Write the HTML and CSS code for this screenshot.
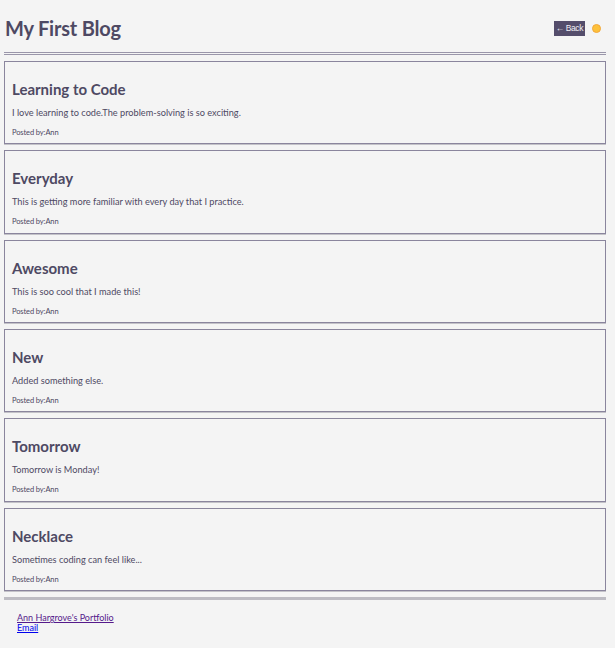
FILE: index.html
```html
<!DOCTYPE html>
<html>
<head>
<meta charset="utf-8">
<link rel="stylesheet" href="styles.css">
</head>
<body>
<header class="top">
  <h1 class="title">My First Blog</h1>
  <div class="actions">
    <a class="back" href="#">&larr; Back</a>
    <span class="dot"></span>
  </div>
</header>
<div class="rule-double"></div>
<main class="posts">
  <article class="post">
    <h2>Learning to Code</h2>
    <p class="body">I love learning to code.The problem-solving is so exciting.</p>
    <p class="meta">Posted by:Ann</p>
  </article>
  <article class="post">
    <h2>Everyday</h2>
    <p class="body">This is getting more familiar with every day that I practice.</p>
    <p class="meta">Posted by:Ann</p>
  </article>
  <article class="post">
    <h2>Awesome</h2>
    <p class="body">This is soo cool that I made this!</p>
    <p class="meta">Posted by:Ann</p>
  </article>
  <article class="post">
    <h2>New</h2>
    <p class="body">Added something else.</p>
    <p class="meta">Posted by:Ann</p>
  </article>
  <article class="post">
    <h2>Tomorrow</h2>
    <p class="body">Tomorrow is Monday!</p>
    <p class="meta">Posted by:Ann</p>
  </article>
  <article class="post">
    <h2>Necklace</h2>
    <p class="body">Sometimes coding can feel like...</p>
    <p class="meta">Posted by:Ann</p>
  </article>
</main>
<div class="rule-thick"></div>
<footer class="foot">
  <a class="visited" href="#">Ann Hargrove's Portfolio</a>
  <a class="link" href="#">Email</a>
</footer>
</body>
</html>
```
FILE: styles.css
```css
html, body {
  margin: 0;
  padding: 0;
  background: #f4f4f4;
}
body {
  font-family: Lato, "Noto Sans", sans-serif;
  color: #4e4963;
  padding: 0 9px 0 4px;
}
.top {
  display: flex;
  align-items: center;
  justify-content: space-between;
  height: 52px;
}
.title {
  margin: 3px 0 0 1px;
  font-size: 20px;
  font-weight: 700;
  color: #4e4963;
  letter-spacing: -0.2px;
}
.actions {
  display: flex;
  align-items: center;
  gap: 7px;
  margin-right: 5px;
  margin-top: 4px;
}
.back {
  display: inline-block;
  background: #544d6b;
  color: #f0eef4;
  font-family: "Liberation Sans", Arial, sans-serif;
  font-size: 8.5px;
  line-height: 15px;
  padding: 0 2px;
  text-decoration: none;
  letter-spacing: -0.4px;
}
.dot {
  width: 7px;
  height: 7px;
  border-radius: 50%;
  background: #fdc13a;
  border: 1px solid #f2a73a;
}
.rule-double {
  height: 1px;
  border-top: 1px solid #9a96aa;
  border-bottom: 1px solid #9a96aa;
  margin: 0 0 6px 0;
}
.posts {
  display: flex;
  flex-direction: column;
  gap: 6px;
}
.post {
  border: 1px solid #8a859d;
  box-shadow: 0 1px 0 #c3c2c8;
  height: 81.35px;
  padding: 0 7px;
  box-sizing: content-box;
}
.post h2 {
  margin: 18px 0 0 0;
  font-size: 15px;
  line-height: 18px;
  font-weight: 700;
  color: #4e4963;
}
.post .body {
  margin: 9px 0 0 0;
  font-size: 9.2px;
  line-height: 12px;
}
.post .meta {
  margin: 9px 0 0 0;
  font-size: 7.5px;
  line-height: 10px;
  letter-spacing: -0.1px;
}
.rule-thick {
  height: 3px;
  background: #bdbcc3;
  margin-top: 6px;
}
.foot {
  display: flex;
  flex-direction: column;
  padding: 13px 0 0 13px;
  font-size: 9px;
  line-height: 10px;
}
.foot .visited { color: #551a8b; }
.foot .link { color: #0000ee; }
```
